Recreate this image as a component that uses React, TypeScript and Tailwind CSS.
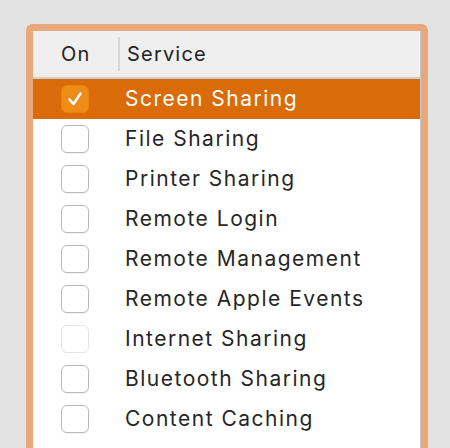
import React from "react";

const services = [
  { name: "Screen Sharing", on: true },
  { name: "File Sharing", on: false },
  { name: "Printer Sharing", on: false },
  { name: "Remote Login", on: false },
  { name: "Remote Management", on: false },
  { name: "Remote Apple Events", on: false },
  { name: "Internet Sharing", on: false, disabled: true },
  { name: "Bluetooth Sharing", on: false },
  { name: "Content Caching", on: false },
];

const Checkbox = ({ checked, disabled }: { checked: boolean; disabled?: boolean }) => {
  if (checked) {
    return (
      <div className="w-[28px] h-[28px] rounded-[6px] bg-[#ef8c17] border border-[#e8850f] flex items-center justify-center">
        <svg width="18" height="18" viewBox="0 0 18 18" fill="none">
          <path d="M3.5 9.5 L7.5 14 L14.5 3.5" stroke="white" strokeWidth="2.6" strokeLinecap="round" strokeLinejoin="round" />
        </svg>
      </div>
    );
  }
  return (
    <div
      className={
        disabled
          ? "w-[28px] h-[28px] rounded-[6px] bg-white border border-[#e4e4e4]"
          : "w-[28px] h-[28px] rounded-[6px] bg-white border border-[#b9b9b9] shadow-[0_1px_1px_rgba(0,0,0,0.06)]"
      }
    />
  );
};

export default function App() {
  return (
    <div className="w-[450px] h-[448px] bg-[#e3e3e3] pt-[24px] pl-[26px] overflow-hidden font-['Inter',sans-serif]">
      <div className="w-[402px] h-[440px] border-[7px] border-b-0 border-[#e8a87c] rounded-t-[7px] bg-white">
        <div className="h-full border-r border-[#c8c8c8]">
          <div className="h-[48px] bg-[#efefef] border-b-[2px] border-[#cfcfcf] flex items-center text-[20px] tracking-[1.2px] text-[#222]">
            <div className="w-[87px] h-[34px] flex items-center pl-[28px] border-r-[2px] border-[#d6d6d6]">On</div>
            <div className="pl-[7px]">Service</div>
          </div>
          {services.map((s) => (
            <div
              key={s.name}
              className={
                s.on
                  ? "h-[40px] flex items-center bg-[#d96b09] text-white text-[21px] tracking-[1.5px]"
                  : "h-[40px] flex items-center text-[#262626] text-[21px] tracking-[1.5px]"
              }
            >
              <div className="w-[92px] pl-[28px] flex items-center">
                <Checkbox checked={s.on} disabled={s.disabled} />
              </div>
              <span>{s.name}</span>
            </div>
          ))}
        </div>
      </div>
    </div>
  );
}
